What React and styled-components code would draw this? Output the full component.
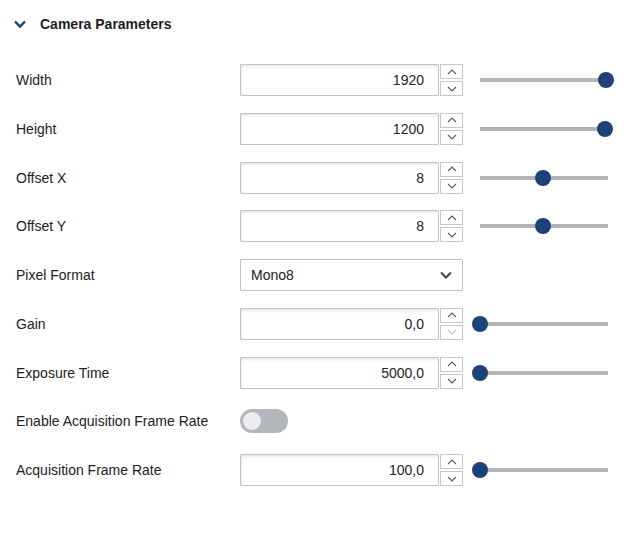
import React from 'react';
import styled, { createGlobalStyle } from 'styled-components';

const GlobalStyle = createGlobalStyle`
  body {
    margin: 0;
    background: #ffffff;
    font-family: 'Liberation Sans', Arial, sans-serif;
    color: #222222;
  }
`;

const Panel = styled.div`
  width: 629px;
  height: 542px;
  background: #ffffff;
`;

const Header = styled.div`
  display: flex;
  align-items: center;
  height: 48px;
  padding-left: 14px;
  gap: 14px;
`;

const Title = styled.h2`
  margin: 0;
  font-size: 14px;
  font-weight: bold;
  color: #1d1d1f;
`;

const Grid = styled.div`
  display: grid;
  grid-template-columns: 207px 223px 128px;
  column-gap: 17px;
  row-gap: 16.75px;
  padding: 16px 0 0 16px;
  align-items: center;
`;

const Label = styled.div`
  font-size: 14px;
  color: #222222;
  line-height: 32px;
  white-space: nowrap;
`;

const Control = styled.div`
  display: flex;
  height: 32px;
  align-items: stretch;
`;

const ValueBox = styled.div`
  flex: 1;
  border: 1px solid #bfc2c6;
  border-radius: 1px;
  box-shadow: inset 1px 2px 3px rgba(0, 0, 0, 0.09);
  display: flex;
  align-items: center;
  justify-content: flex-end;
  padding-right: 14px;
  font-size: 14px;
  color: #222222;
`;

const Spinner = styled.div`
  width: 23px;
  margin-left: 1px;
  display: flex;
  flex-direction: column;
  justify-content: space-between;
`;

const SpinButton = styled.div`
  height: 15px;
  border: 1px solid #c4c7cb;
  box-sizing: border-box;
  display: flex;
  align-items: center;
  justify-content: center;
  color: ${(p) => (p.disabled ? '#c4c7cb' : '#555a60')};
`;

const Select = styled.div`
  flex: 1;
  border: 1px solid #bfc2c6;
  border-radius: 1px;
  display: flex;
  align-items: center;
  justify-content: space-between;
  padding: 0 10px;
  font-size: 14px;
  color: #222222;
`;

const SliderWrap = styled.div`
  position: relative;
  height: 32px;
  display: flex;
  align-items: center;
`;

const Track = styled.div`
  width: 128px;
  height: 4px;
  background: #b1b4b8;
`;

const Thumb = styled.div`
  position: absolute;
  top: 8px;
  width: 16px;
  height: 16px;
  border-radius: 50%;
  background: #1b4379;
`;

const Toggle = styled.div`
  width: 48px;
  height: 24px;
  border-radius: 12px;
  background: #b3b6ba;
  display: flex;
  align-items: center;
  padding-left: 3px;
  box-sizing: border-box;
`;

const Knob = styled.div`
  width: 18px;
  height: 18px;
  border-radius: 50%;
  background: #ececee;
`;

const Chevron = ({ size = 12, color = '#1b3f73', width = 2.4 }) => (
  <svg width={size} height={size} viewBox="0 0 12 12">
    <path d="M1 3.5 L6 8.5 L11 3.5" fill="none" stroke={color} strokeWidth={width} />
  </svg>
);

const Arrow = ({ up }) => (
  <svg width="10" height="6" viewBox="0 0 10 6">
    <path
      d={up ? 'M1 5 L5 1 L9 5' : 'M1 1 L5 5 L9 1'}
      fill="none"
      stroke="currentColor"
      strokeWidth="1.1"
    />
  </svg>
);

const NumberField = ({ value, downDisabled }) => (
  <Control>
    <ValueBox>{value}</ValueBox>
    <Spinner>
      <SpinButton>
        <Arrow up />
      </SpinButton>
      <SpinButton disabled={downDisabled}>
        <Arrow />
      </SpinButton>
    </Spinner>
  </Control>
);

const Slider = ({ pct }) => (
  <SliderWrap>
    <Track />
    <Thumb style={{ left: `${-8 + pct * 126}px` }} />
  </SliderWrap>
);

const rows = [
  { label: 'Width', value: '1920', pct: 1 },
  { label: 'Height', value: '1200', pct: 0.99 },
  { label: 'Offset X', value: '8', pct: 0.5 },
  { label: 'Offset Y', value: '8', pct: 0.5 },
  { label: 'Pixel Format', select: 'Mono8' },
  { label: 'Gain', value: '0,0', pct: 0, downDisabled: true },
  { label: 'Exposure Time', value: '5000,0', pct: 0 },
  { label: 'Enable Acquisition Frame Rate', toggle: true },
  { label: 'Acquisition Frame Rate', value: '100,0', pct: 0 },
];

export default function App() {
  return (
    <Panel>
      <GlobalStyle />
      <Header>
        <Chevron />
        <Title>Camera Parameters</Title>
      </Header>
      <Grid>
        {rows.map((r) => (
          <React.Fragment key={r.label}>
            <Label>{r.label}</Label>
            {r.select ? (
              <Control>
                <Select>
                  {r.select}
                  <Chevron size={12} color="#444" width={2} />
                </Select>
              </Control>
            ) : r.toggle ? (
              <Control style={{ alignItems: 'center' }}>
                <Toggle>
                  <Knob />
                </Toggle>
              </Control>
            ) : (
              <NumberField value={r.value} downDisabled={r.downDisabled} />
            )}
            {r.pct !== undefined ? <Slider pct={r.pct} /> : <div />}
          </React.Fragment>
        ))}
      </Grid>
    </Panel>
  );
}
